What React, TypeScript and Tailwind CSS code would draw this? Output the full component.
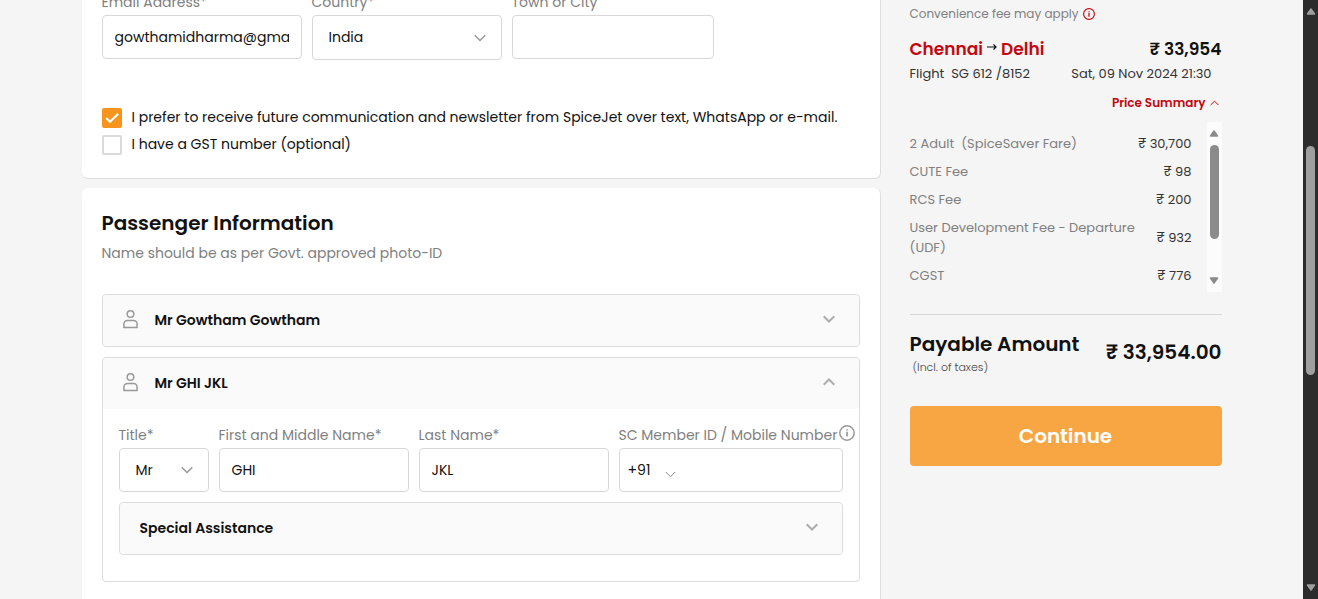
import React, { useState } from "react";

const fares = [
  { label: "2 Adult  (SpiceSaver Fare)", amount: "₹ 30,700" },
  { label: "CUTE Fee", amount: "₹ 98" },
  { label: "RCS Fee", amount: "₹ 200" },
  { label: "User Development Fee - Departure (UDF)", amount: "₹ 932" },
  { label: "CGST", amount: "₹ 776" },
];

const fieldClass =
  "h-11 w-full rounded border border-[#d8d8d8] bg-white px-3 text-sm text-[#111] outline-none";
const selectClass =
  "w-full appearance-none rounded border border-[#d8d8d8] bg-white px-4 text-sm text-[#111] outline-none";
const labelClass = "text-sm leading-5 whitespace-nowrap text-[#808080]";

function Chevron({ up = false, className }: { up?: boolean; className: string }) {
  return (
    <svg viewBox="0 0 12 8" fill="none" stroke="currentColor" className={className} aria-hidden="true">
      <path d={up ? "M0.7 6.8 6 1.5l5.3 5.3" : "M0.7 1.2 6 6.5l5.3-5.3"} vectorEffect="non-scaling-stroke" />
    </svg>
  );
}

function PersonIcon() {
  return (
    <svg viewBox="0 0 16 20" fill="none" stroke="#999" strokeWidth="1.5" className="mb-1 h-5 w-4" aria-hidden="true">
      <circle cx="7.5" cy="5" r="3.3" />
      <path d="M0.9 18.400v-3.400a3.600 3.600 0 0 1 3.600-3.600h6a3.600 3.600 0 0 1 3.600 3.600v3.400z" strokeLinejoin="round" />
    </svg>
  );
}

function InfoIcon({ className }: { className: string }) {
  return (
    <svg viewBox="0 0 16 16" fill="none" stroke="currentColor" className={className} aria-hidden="true">
      <circle cx="8" cy="8" r="7.2" strokeWidth="1.5" />
      <path d="M8 6.8v4.8M8 4.2v1.4" strokeWidth="1.7" />
    </svg>
  );
}

function Check({ id, initial, children }: { id: string; initial: boolean; children: React.ReactNode }) {
  const [on, setOn] = useState(initial);
  return (
    <div className="flex h-5 items-center gap-[10px]">
      <div className="relative size-5">
        <input
          id={id}
          type="checkbox"
          checked={on}
          onChange={() => setOn(!on)}
          className="block size-5 appearance-none rounded-[2px] border-2 border-[#dadada] bg-white checked:border-[#f7941d] checked:bg-[#f7941d]"
        />
        {on && (
          <svg viewBox="0 0 20 20" fill="none" stroke="white" strokeWidth="2.2" className="pointer-events-none absolute inset-0" aria-hidden="true">
            <path d="M4.2 10 8 13.800l8.200-8" />
          </svg>
        )}
      </div>
      <label htmlFor={id} className="pb-[2px] text-sm leading-5 text-[#111]">
        {children}
      </label>
    </div>
  );
}

function AccordionButton({ title, open = false }: { title: string; open?: boolean }) {
  return (
    <button type="button" aria-expanded={open} className="flex h-[51px] w-full items-center rounded bg-[#fafafa] px-5 text-left">
      <PersonIcon />
      <span className="ml-4 flex-1 pb-[2px] text-sm font-semibold text-[#111]">{title}</span>
      <Chevron up={open} className="mr-1 mb-1 h-2 w-3 stroke-2 text-[#adadad]" />
    </button>
  );
}

function Triangle({ down = false, className }: { down?: boolean; className: string }) {
  return (
    <svg viewBox="0 0 10 8" className={className} aria-hidden="true">
      <path d={down ? "M1.500 1h7l-3.500 5z" : "M1.500 7h7L5 2z"} fill="currentColor" stroke="currentColor" strokeWidth="1.500" strokeLinejoin="round" />
    </svg>
  );
}

export default function App() {
  return (
    <div className="flex h-screen overflow-hidden bg-[#f5f5f5] font-['Poppins','Inter',sans-serif]">
      <main className="mx-auto flex min-w-0 flex-1 justify-center overflow-hidden">
        <div className="flex w-full max-w-[1140px] gap-[29px]">
          <div className="min-w-0 flex-1">
            <section className="-mt-7 rounded-md border-r border-b border-[#dedede] bg-white px-5 pt-5 pb-[23px]">
              <div className="flex items-start gap-[10px]">
                <div className="flex w-[200px] flex-col gap-[3px]">
                  <label htmlFor="email" className={labelClass}>Email Address*</label>
                  <input id="email" type="text" defaultValue="gowthamidharma@gmail.com" className={fieldClass} />
                </div>
                <div className="flex w-[190px] flex-col gap-[3px]">
                  <label htmlFor="country" className={labelClass}>Country*</label>
                  <div className="relative">
                    <select id="country" className={`${selectClass} h-[45px] pb-[2px]`}>
                      <option>India</option>
                    </select>
                    <Chevron className="pointer-events-none absolute top-[19px] right-4 h-2 w-3 stroke-[1.5] text-[#999]" />
                  </div>
                </div>
                <div className="flex w-[202px] flex-col gap-[3px]">
                  <label htmlFor="town" className={labelClass}>Town or City</label>
                  <input id="town" type="text" className={fieldClass} />
                </div>
              </div>
              <div className="mt-12 flex flex-col gap-[7px]">
                <Check id="news" initial={true}>
                  I prefer to receive future communication and newsletter from SpiceJet over text, WhatsApp or e-mail.
                </Check>
                <Check id="gst" initial={false}>I have a GST number (optional)</Check>
              </div>
            </section>

            <section className="mt-[9px] rounded-md border-r border-[#dedede] bg-white px-5 pt-5 pb-10">
              <h2 className="text-xl leading-[30px] font-semibold text-[#111]">Passenger Information</h2>
              <p className="mt-[5px] text-sm leading-5 text-[#808080]">
                Name should be as per Govt. approved photo-ID
              </p>

              <div className="mt-[31px] flex flex-col gap-[10px]">
                <div className="rounded border border-[#dcdcdc]">
                  <AccordionButton title="Mr Gowtham Gowtham" />
                </div>
                <div className="rounded border border-[#dcdcdc]">
                  <AccordionButton title="Mr GHI JKL" open />
                  <div className="px-4 pt-4 pb-[26px]">
                    <div className="flex gap-[10px]">
                      <div className="flex w-[90px] flex-col gap-[3px]">
                        <label htmlFor="title" className={labelClass}>Title*</label>
                        <div className="relative">
                          <select id="title" className={`${selectClass} h-11`}>
                            <option>Mr</option>
                          </select>
                          <Chevron className="pointer-events-none absolute top-[18px] right-4 h-2 w-3 stroke-[1.5] text-[#999]" />
                        </div>
                      </div>
                      <div className="flex w-[190px] flex-col gap-[3px]">
                        <label htmlFor="first" className={labelClass}>First and Middle Name*</label>
                        <input id="first" type="text" defaultValue="GHI" className={fieldClass} />
                      </div>
                      <div className="flex w-[190px] flex-col gap-[3px]">
                        <label htmlFor="last" className={labelClass}>Last Name*</label>
                        <input id="last" type="text" defaultValue="JKL" className={fieldClass} />
                      </div>
                      <div className="flex min-w-0 flex-1 flex-col gap-[3px]">
                        <div className="flex h-5 items-center gap-[2px]">
                          <label htmlFor="member" className={labelClass}>SC Member ID / Mobile Number</label>
                          <InfoIcon className="mb-1 size-4 shrink-0 text-[#999]" />
                        </div>
                        <div className="flex h-11 items-center rounded border border-[#d8d8d8] bg-white pl-2">
                          <div className="relative w-14">
                            <select aria-label="Country code" className="w-full appearance-none text-sm text-[#111] outline-none">
                              <option>+91</option>
                            </select>
                            <Chevron className="pointer-events-none absolute right-2 bottom-1 h-[7px] w-[11px] text-[#888]" />
                          </div>
                          <input id="member" type="text" className="h-10 min-w-0 flex-1 px-2 text-sm outline-none" />
                        </div>
                      </div>
                    </div>
                    <div className="mt-[10px] rounded border border-[#dcdcdc]">
                      <button type="button" className="flex h-[51px] w-full items-center rounded bg-[#fafafa] px-5 text-left">
                        <span className="flex-1 pb-[2px] text-sm font-semibold text-[#111]">Special Assistance</span>
                        <Chevron className="mr-1 mb-1 h-2 w-3 stroke-2 text-[#adadad]" />
                      </button>
                    </div>
                  </div>
                </div>
              </div>
            </section>
          </div>

          <aside className="w-[312px] shrink-0 pt-1">
            <p className="flex items-center gap-1 text-xs leading-5 text-[#808080]">
              Convenience fee may apply
              <InfoIcon className="size-3 text-[#c4070f]" />
            </p>
            <div className="mt-3 flex items-center justify-between leading-[26px]">
              <h3 className="flex items-center gap-1 text-[17px] leading-[26px] font-semibold text-[#c4070f]">
                Chennai
                <svg viewBox="0 0 10 8" fill="none" stroke="#111" strokeWidth="1.2" className="mb-1 h-2 w-[10px]" role="img" aria-label="to">
                  <path d="M0 4h9M6.500 1.500 9 4 6.500 6.500" />
                </svg>
                Delhi
              </h3>
              <span className="text-[17px] font-semibold text-[#111]">₹ 33,954</span>
            </div>
            <div className="flex justify-between pt-[2px] pr-[10px] text-[13px] leading-5 text-[#333]">
              <span className="whitespace-pre">Flight  SG 612 /8152</span>
              <span className="whitespace-pre">Sat, 09 Nov 2024 21:30</span>
            </div>
            <div className="mt-[9px] flex justify-end">
              <button type="button" aria-expanded="true" className="flex items-center gap-1 pr-[3px] text-xs leading-5 font-semibold text-[#c4070f]">
                Price Summary
                <Chevron up className="h-[6px] w-[9px]" />
              </button>
            </div>

            <div className="mt-[9px] flex">
              <div className="min-w-0 flex-1 pt-2 pr-[15px] pb-[2px]">
                <table className="w-full text-[13px] leading-5">
                  <tbody>
                    {fares.map((fare) => (
                      <tr key={fare.label}>
                        <th scope="row" className="w-[230px] py-1 text-left font-normal whitespace-pre-wrap text-[#808080]">{fare.label}</th>
                        <td className="py-1 text-right whitespace-nowrap text-[#333]">{fare.amount}</td>
                      </tr>
                    ))}
                  </tbody>
                </table>
              </div>
              <div aria-hidden="true" className="flex w-[15px] flex-col items-center bg-[#fcfcfc] py-[7px] text-[#8b8b8b]">
                <Triangle className="h-2 w-[10px]" />
                <div className="mt-2 h-[94px] w-[9px] rounded-full bg-[#8b8b8b]" />
                <Triangle down className="mt-auto h-2 w-[10px]" />
              </div>
            </div>

            <div className="mt-[22px] flex items-center justify-between border-t border-[#d8d8d8] pt-[14px]">
              <div>
                <h3 className="text-xl leading-[30px] font-semibold text-[#111]">Payable Amount</h3>
                <p className="pl-[3px] text-[11px] leading-4 font-light text-[#444]">(Incl. of taxes)</p>
              </div>
              <span className="text-xl font-semibold text-[#111]">₹ 33,954.00</span>
            </div>
            <button type="button" className="mt-[31px] h-[60px] w-full rounded bg-[#f8a543] text-xl font-semibold text-white">
              Continue
            </button>
          </aside>
        </div>
      </main>

      <div aria-hidden="true" className="flex w-[15px] shrink-0 flex-col items-center bg-[#2c2c2c] py-[7px] text-[#9f9f9f]">
        <Triangle className="h-2 w-[10px]" />
        <div className="mt-[131px] h-[229px] w-[9px] rounded-full bg-[#9f9f9f]" />
        <Triangle down className="mt-auto h-2 w-[10px]" />
      </div>
    </div>
  );
}
